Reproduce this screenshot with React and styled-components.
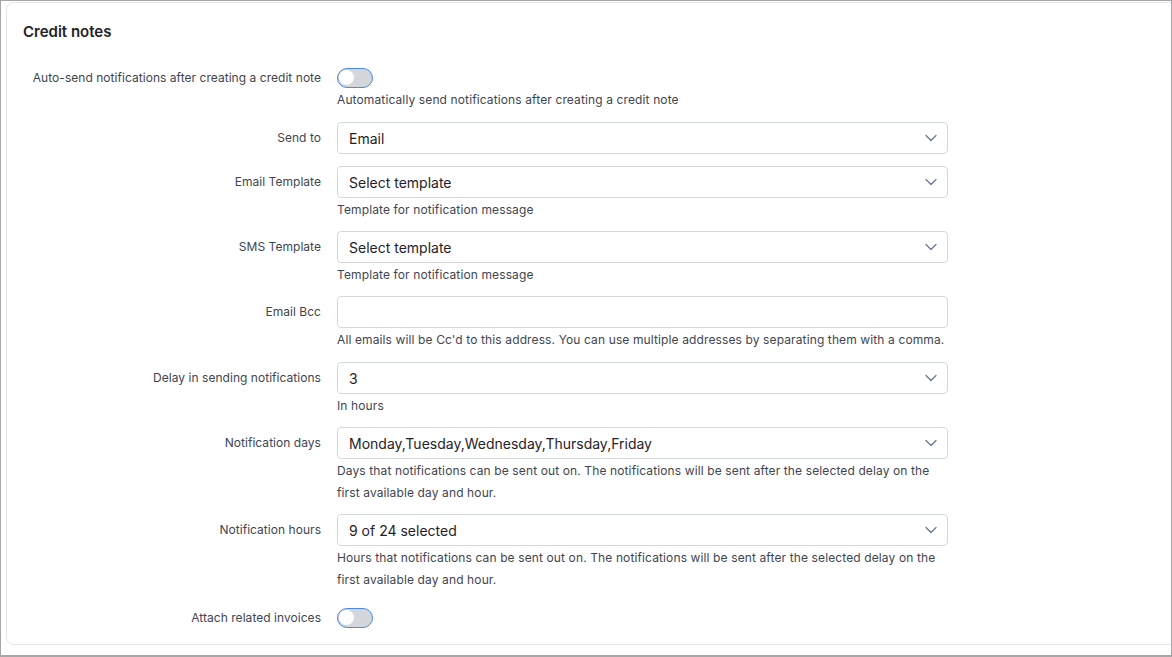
import React from "react";
import styled, { createGlobalStyle } from "styled-components";

const Global = createGlobalStyle`
  html, body { margin: 0; padding: 0; background: #ffffff; }
  body { font-family: Inter, "Noto Sans", "Liberation Sans", sans-serif; -webkit-font-smoothing: antialiased; }
  * { box-sizing: border-box; }
`;

const Frame = styled.div`
  width: 1172px;
  height: 657px;
  border: 1px solid #a6a6a6;
  border-bottom-width: 2px;
  padding: 1px 0 0 5px;
  overflow: hidden;
  background: #fff;
`;

const Card = styled.section`
  width: 1200px;
  height: 643px;
  border: 1px solid #e3e6eb;
  border-radius: 8px;
  padding: 0 16px;
`;

const Title = styled.h2`
  margin: 0;
  padding-top: 19px;
  height: 59px;
  font-size: 15px;
  line-height: 20px;
  font-weight: 600;
  color: #1f2329;
`;

const Form = styled.div`
  display: flex;
  flex-direction: column;
`;

const Row = styled.div`
  display: grid;
  grid-template-columns: 298px 611px;
  column-gap: 16px;
  margin-bottom: ${(p) => p.$mb ?? 10}px;
`;

const Label = styled.label`
  text-align: right;
  font-size: 12px;
  line-height: 16px;
  padding-top: 8px;
  letter-spacing: 0.04px;
  color: #3f4550;
`;

const Field = styled.div`
  display: flex;
  flex-direction: column;
`;

const SelectBox = styled.div`
  height: 32px;
  border: 1px solid #d3d8de;
  border-radius: 4px;
  display: flex;
  align-items: center;
  justify-content: space-between;
  padding: 0 10px 0 11px;
  font-size: 14px;
  color: #1f2329;
  background: #fff;
`;

const Input = styled.div`
  height: 32px;
  border: 1px solid #d3d8de;
  border-radius: 4px;
  background: #fff;
`;

const Help = styled.div`
  margin-top: 1px;
  font-size: 12px;
  line-height: 22px;
  letter-spacing: 0.12px;
  color: #3f4550;
`;

const Toggle = styled.div`
  margin-top: 6px;
  width: 36px;
  height: 20px;
  border: 1.5px solid #4f87e6;
  border-radius: 10px;
  background: #d3d6db;
  position: relative;
  &::after {
    content: "";
    position: absolute;
    left: 1px;
    top: 1px;
    width: 15px;
    height: 15px;
    border-radius: 50%;
    background: #fff;
  }
`;

const Chevron = () => (
  <svg width="12" height="8" viewBox="0 0 12 8" fill="none">
    <path d="M1 1.5L6 6.5L11 1.5" stroke="#6b7a90" strokeWidth="1.3" strokeLinecap="round" strokeLinejoin="round" />
  </svg>
);

const Select = ({ value }) => (
  <SelectBox>
    <span>{value}</span>
    <Chevron />
  </SelectBox>
);

export default function App() {
  return (
    <>
      <Global />
      <Frame>
        <Card>
          <Title>Credit notes</Title>
          <Form>
            <Row $mb={11}>
              <Label>Auto-send notifications after creating a credit note</Label>
              <Field>
                <Toggle />
                <Help>Automatically send notifications after creating a credit note</Help>
              </Field>
            </Row>
            <Row $mb={12}>
              <Label>Send to</Label>
              <Field>
                <Select value="Email" />
              </Field>
            </Row>
            <Row>
              <Label>Email Template</Label>
              <Field>
                <Select value="Select template" />
                <Help>Template for notification message</Help>
              </Field>
            </Row>
            <Row>
              <Label>SMS Template</Label>
              <Field>
                <Select value="Select template" />
                <Help>Template for notification message</Help>
              </Field>
            </Row>
            <Row $mb={11}>
              <Label>Email Bcc</Label>
              <Field>
                <Input />
                <Help>All emails will be Cc'd to this address. You can use multiple addresses by separating them with a comma.</Help>
              </Field>
            </Row>
            <Row>
              <Label>Delay in sending notifications</Label>
              <Field>
                <Select value="3" />
                <Help>In hours</Help>
              </Field>
            </Row>
            <Row>
              <Label>Notification days</Label>
              <Field>
                <Select value="Monday,Tuesday,Wednesday,Thursday,Friday" />
                <Help>Days that notifications can be sent out on. The notifications will be sent after the selected delay on the first available day and hour.</Help>
              </Field>
            </Row>
            <Row $mb={11}>
              <Label>Notification hours</Label>
              <Field>
                <Select value="9 of 24 selected" />
                <Help>Hours that notifications can be sent out on. The notifications will be sent after the selected delay on the first available day and hour.</Help>
              </Field>
            </Row>
            <Row>
              <Label>Attach related invoices</Label>
              <Field>
                <Toggle />
              </Field>
            </Row>
          </Form>
        </Card>
      </Frame>
    </>
  );
}
